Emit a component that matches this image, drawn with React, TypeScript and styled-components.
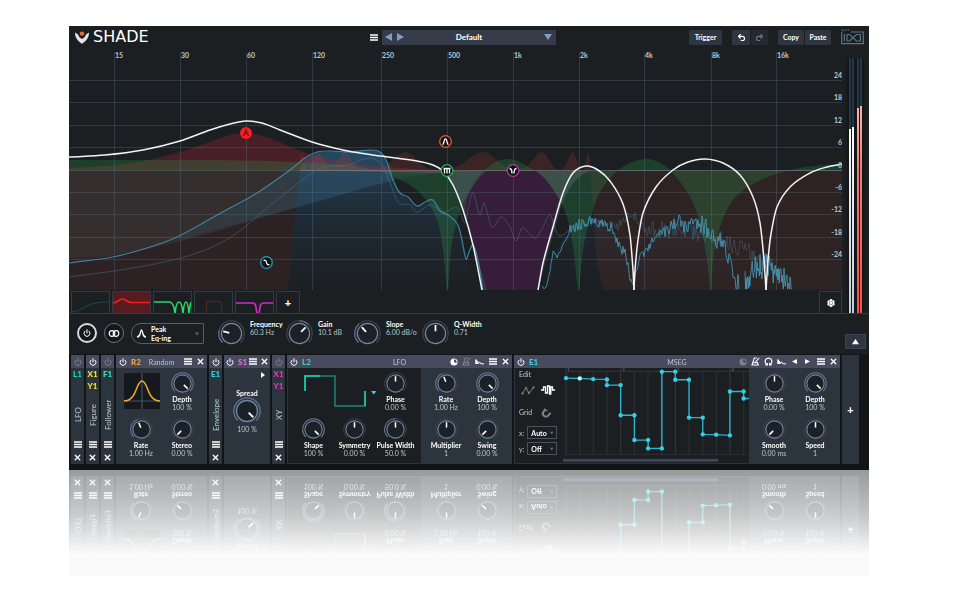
import React from "react";
import styled, { createGlobalStyle } from "styled-components";
import { Power, Redo2, Settings, Undo2, X } from "lucide-react";

const c = {
  bg: "#1c1f22",
  black: "#121417",
  panel: "#2c343d",
  bar: "#484a5e",
  control: "#2f3541",
  line: "#343a44",
  text: "#ffffff",
  soft: "#b9c8d0",
  ring: "#7386a0",
  cyan: "#35cfe3",
  teal: "#19d3b4",
};

const Global = createGlobalStyle`
  * { box-sizing: border-box; }
  body { margin: 0; background: #ffffff; font-family: Lato, "Open Sans", sans-serif; font-size: 7px; line-height: 8px; color: ${c.text}; }
  button, select, input { font: inherit; color: inherit; margin: 0; padding: 0; }
  button { cursor: pointer; }
  svg { display: block; }
`;

const Page = styled.main`
  padding: 26px 88px 13px 69px;
`;
const Stage = styled.div`
  background: #fafafa;
  padding-bottom: 106px;
`;
const Plugin = styled.div`
  background: ${c.bg};
`;

/* ---------- header ---------- */
const Header = styled.header`
  display: flex;
  align-items: center;
  height: 22px;
  padding: 0 5px 0 6px;
`;
const Brand = styled.h1`
  display: flex;
  align-items: center;
  gap: 4px;
  flex: 0 1 292px;
  margin: 0;
  font: 400 16px/18px "DejaVu Sans", sans-serif;
`;
const IconButton = styled.button<{ $dim?: boolean; $size?: number }>`
  display: flex;
  align-items: center;
  justify-content: center;
  flex: none;
  width: ${(p) => p.$size ?? 13}px;
  height: 13px;
  border: 0;
  background: none;
  color: ${(p) => (p.$dim ? "#7d8190" : c.text)};
`;
const Preset = styled.div`
  display: flex;
  align-items: center;
  width: 174px;
  height: 15px;
  margin-left: 2px;
  padding: 0 4px 0 0;
  background: #353b48;
  color: #7f9cc4;
`;
const PresetSelect = styled.select`
  flex: 1;
  min-width: 0;
  padding-right: 12px;
  border: 0;
  background: none;
  appearance: none;
  color: ${c.text};
  font-weight: 700;
  font-size: 8px;
  line-height: 13px;
  text-align-last: center;
`;
const HeaderRight = styled.div`
  display: flex;
  align-items: center;
  margin-left: auto;
`;
const ButtonGroup = styled.div`
  display: flex;
  gap: 1px;
  margin-right: 10px;
`;
const HeaderButton = styled.button<{ $w: number; $dim?: boolean }>`
  display: flex;
  align-items: center;
  justify-content: center;
  width: ${(p) => p.$w}px;
  height: 15px;
  border: 0;
  border-radius: 1px;
  background: ${(p) => (p.$dim ? "#242830" : c.control)};
  color: ${(p) => (p.$dim ? "#6d737d" : c.text)};
  font-weight: 700;
`;

/* ---------- analyzer ---------- */
const Analyzer = styled.section`
  display: grid;
  grid-template-columns: minmax(0, 1fr) 27px;
  border-bottom: 1px solid ${c.line};
`;
const Plot = styled.svg`
  width: 100%;
  height: auto;
`;
const Meters = styled.div`
  display: flex;
  gap: 1px;
  margin-top: 10px;
  padding: 0 7px;
  background: linear-gradient(90deg, ${c.bg} 3px, #14161a 6px, #14161a 21px, ${c.bg} 23px);
`;
const Meter = styled.div<{ $top: number; $hot?: boolean; $gap?: boolean }>`
  width: 2px;
  margin-left: ${(p) => (p.$gap ? 2 : 0)}px;
  padding-top: ${(p) => p.$top}px;
  background-color: #263948;
  &::after {
    content: "";
    display: block;
    height: 100%;
    background: ${(p) => (p.$hot ? "linear-gradient(#f3b7b2, #e8827c 30%, #f0524b)" : "linear-gradient(#ffffff, #c3ced6)")};
  }
`;
const BandRow = styled.div`
  display: flex;
  gap: 2px;
  height: 23px;
  padding: 1px 0 0 2px;
`;
const Band = styled.button<{ $active?: boolean; $w?: number }>`
  width: ${(p) => p.$w ?? 39}px;
  height: 22px;
  display: flex;
  align-items: center;
  justify-content: center;
  border: 1px solid ${c.line};
  border-bottom: 0;
  background: ${(p) => (p.$active ? "#571c1f" : c.bg)};
  font-weight: 900;
  font-size: 11px;
`;
const GearSlot = styled.div`
  margin-left: auto;
`;

/* ---------- band controls ---------- */
const Controls = styled.section`
  display: flex;
  align-items: flex-start;
  height: 40px;
  padding: 6px 3px 0 8px;
`;
const RoundButton = styled.button<{ $on?: boolean }>`
  display: flex;
  align-items: center;
  justify-content: center;
  width: 20px;
  height: 20px;
  margin: 3px 7px 0 0;
  border: ${(p) => (p.$on ? "2px solid #d5dce2" : "1px solid #69728a")};
  border-radius: 50%;
  background: #15181b;
`;
const TypeBox = styled.div`
  display: flex;
  align-items: center;
  gap: 4px;
  width: 73px;
  height: 21px;
  margin: 3px 14px 0 0;
  padding: 0 4px;
  border: 1px solid #565d70;
  border-radius: 10px 1px 1px 10px;
  color: #566888;
`;
const TypeField = styled.label`
  display: flex;
  flex-direction: column;
  flex: 1;
  min-width: 0;
  color: ${c.text};
  font-weight: 700;
`;
const PlainSelect = styled.select`
  width: 100%;
  height: 9px;
  border: 0;
  background: none;
  appearance: none;
  color: ${c.text};
  font-weight: 700;
`;
const CollapseButton = styled.button`
  display: flex;
  align-items: center;
  justify-content: center;
  width: 21px;
  height: 15px;
  margin: 14px 0 0 auto;
  border: 1px solid #3a4150;
  background: ${c.control};
`;

/* ---------- knobs ---------- */
const KnobCell = styled.label<{ $row?: boolean; $w?: number }>`
  display: flex;
  flex-direction: ${(p) => (p.$row ? "row" : "column")};
  align-items: ${(p) => (p.$row ? "flex-start" : "center")};
  gap: ${(p) => (p.$row ? 5 : 0)}px;
  width: ${(p) => p.$w ?? 41}px;
  white-space: nowrap;
`;
const Dial = styled.span`
  position: relative;
  flex: none;
`;
const DialInput = styled.input`
  position: absolute;
  inset: 0;
  width: 100%;
  height: 100%;
  opacity: 0;
`;
const KnobText = styled.span<{ $row?: boolean }>`
  display: flex;
  flex-direction: column;
  align-items: ${(p) => (p.$row ? "flex-start" : "center")};
`;
const KnobName = styled.span`
  font-weight: 700;
  line-height: 8px;
`;
const KnobValue = styled.output`
  color: ${c.soft};
  line-height: 9px;
`;

const polar = (r: number, deg: number) => {
  const a = ((deg - 90) * Math.PI) / 180;
  return `${(12 + r * Math.cos(a)).toFixed(2)} ${(12 + r * Math.sin(a)).toFixed(2)}`;
};
const arc = (r: number, from: number, to: number) =>
  `M${polar(r, from)}A${r} ${r} 0 ${to - from > 180 ? 1 : 0} 1 ${polar(r, to)}`;

type KnobProps = { name: string; value: string; turn: number; size?: number; row?: boolean; w?: number; bipolar?: boolean; labelFirst?: boolean };
function KnobDial({ name, turn, size = 23, bipolar }: KnobProps) {
  const start = bipolar ? 0 : -135;
  return (
    <Dial>
      <svg width={size} height={size} viewBox="0 0 24 24" fill="none" aria-hidden="true">
        <circle cx="12" cy="12" r="9" fill="#1c2127" stroke={c.ring} strokeWidth="1.1" />
        <path d={arc(11.3, -135, 135)} stroke="#3d4555" strokeWidth="1" />
        {turn > start && <path d={arc(11.3, start, turn)} stroke="#5d6f90" strokeWidth="1.1" />}
        <path d={`M${polar(2, turn)}L${polar(7.6, turn)}`} stroke="#fff" strokeWidth="1.6" />
      </svg>
      <DialInput type="range" min={-135} max={135} defaultValue={turn} aria-label={name} />
    </Dial>
  );
}
function Knob(p: KnobProps) {
  return (
    <KnobCell $row={p.row} $w={p.w}>
      {p.labelFirst && <KnobName>{p.name}</KnobName>}
      <KnobDial {...p} />
      <KnobText $row={p.row}>
        {!p.labelFirst && <KnobName>{p.name}</KnobName>}
        <KnobValue>{p.value}</KnobValue>
      </KnobText>
    </KnobCell>
  );
}

/* ---------- rack ---------- */
const Rack = styled.section`
  display: flex;
  gap: 2px;
  height: 116px;
  padding: 1px 10px 6px 2px;
  background: ${c.black};
  -webkit-box-reflect: below 0 linear-gradient(transparent 28%, rgba(0, 0, 0, 0.24) 62%, rgba(0, 0, 0, 0.42));
`;
const Panel = styled.article<{ $w?: number; $grow?: number }>`
  display: flex;
  flex-direction: column;
  flex: ${(p) => (p.$grow ? `${p.$grow} 1 0` : `0 0 ${p.$w}px`)};
  min-width: 0;
  overflow: hidden;
  background: ${c.panel};
`;
const PanelBar = styled.header<{ $narrow?: boolean; $tight?: boolean }>`
  display: grid;
  grid-template-columns: ${(p) => (p.$narrow ? "1fr" : p.$tight ? "1fr auto" : "1fr auto 1fr")};
  align-items: center;
  justify-items: ${(p) => (p.$narrow ? "center" : "stretch")};
  flex: none;
  height: 13px;
  background: ${c.bar};
`;
const BarSide = styled.div<{ $end?: boolean }>`
  display: flex;
  align-items: center;
  justify-content: ${(p) => (p.$end ? "flex-end" : "flex-start")};
`;
const Tag = styled.strong<{ $color: string }>`
  color: ${(p) => p.$color};
  font-weight: 900;
  font-size: 8px;
  margin-left: 2px;
`;
const BarTitle = styled.h2`
  margin: 0;
  color: ${c.soft};
  font-weight: 400;
  font-size: 7px;
  line-height: 8px;
`;
const NarrowBody = styled.div`
  display: flex;
  flex-direction: column;
  align-items: center;
  flex: 1;
  min-height: 0;
  padding-top: 2px;
`;
const TagStack = styled.div`
  display: flex;
  flex-direction: column;
  gap: 4px;
  height: 21px;
  & > strong { margin: 0; }
`;
const SideName = styled.h2`
  flex: 1;
  min-height: 0;
  display: flex;
  align-items: center;
  justify-content: center;
  margin: 0;
  writing-mode: vertical-rl;
  transform: rotate(180deg);
  color: ${c.soft};
  font-weight: 400;
  font-size: 8px;
  line-height: 10px;
`;
const KnobGrid = styled.div<{ $cols: number; $dark?: boolean; $grow?: boolean }>`
  display: grid;
  grid-template-columns: repeat(${(p) => p.$cols}, 41px);
  grid-auto-rows: 46px;
  justify-content: center;
  flex: ${(p) => (p.$grow ? "1 1 auto" : "0 0 91px")};
  padding-top: 4px;
  background: ${(p) => (p.$dark ? c.bg : c.panel)};
`;
const PanelBody = styled.div`
  display: flex;
  flex: 1;
  min-height: 0;
  margin: 0 0 1px 1px;
`;
const ShapeBox = styled.div`
  width: 36px;
  height: 36px;
  margin: 1px 0 0 3px;
  background: #15181c;
`;
const WaveCell = styled.div`
  grid-column: span 2;
`;
const SpreadBody = styled.div`
  display: flex;
  flex-direction: column;
  align-items: center;
  & > svg { align-self: flex-end; margin: 4px 5px 11px; }
`;
const EditColumn = styled.div`
  flex: 0 0 48px;
  display: grid;
  grid-template-columns: auto 1fr;
  align-content: start;
  align-items: center;
  padding: 2px 5px 0 4px;
  gap: 3px;
  background: ${c.bg};
  color: ${c.soft};
`;
const EditWide = styled.span`
  grid-column: span 2;
`;
const EditTools = styled.div`
  grid-column: span 2;
  display: flex;
  gap: 2px;
  margin: 2px 0 5px;
`;
const GridLine = styled.div`
  grid-column: span 2;
  display: flex;
  align-items: center;
  gap: 5px;
  margin-bottom: 4px;
`;
const ToolButton = styled.button<{ $on?: boolean }>`
  display: flex;
  width: 18px;
  height: 14px;
  align-items: center;
  justify-content: center;
  border: 0;
  background: none;
  color: ${(p) => (p.$on ? "#ffffff" : "#7c838b")};
`;
const BoxSelectWrap = styled.span`
  display: flex;
  align-items: center;
  width: 30px;
  height: 13px;
  padding: 0 3px;
  border: 1px solid #4a505c;
  color: #5d6f8b;
`;
const SegGraph = styled.div`
  flex: 1;
  min-width: 0;
  background: ${c.bg};
`;
const AddPanel = styled.button`
  flex: 0 0 17px;
  border: 0;
  background: ${c.panel};
  font-weight: 900;
  font-size: 11px;
`;

/* ---------- small drawings ---------- */
const Bars = () => (
  <svg width="8" height="7" viewBox="0 0 8 7" aria-hidden="true">
    <path d="M0 1h8M0 3.5h8M0 6h8" stroke="currentColor" strokeWidth="1.3" />
  </svg>
);
const Cross = () => <X size={9} strokeWidth={3.6} aria-hidden="true" />;
const PowerIcon = () => <Power size={8} strokeWidth={3} aria-hidden="true" />;
const Tri = ({ d, s = 8 }: { d: "left" | "right" | "down" | "up"; s?: number }) => {
  const paths = { left: "M8 0V8L0 4Z", right: "M0 0V8L8 4Z", down: "M0 1H8L4 7Z", up: "M0 7H8L4 1Z" };
  return (
    <svg width={s} height={s} viewBox="0 0 8 8" aria-hidden="true">
      <path d={paths[d]} fill="currentColor" />
    </svg>
  );
};
const Contrast = () => (
  <svg width="8" height="8" viewBox="0 0 8 8" aria-hidden="true">
    <circle cx="4" cy="4" r="3.6" fill="currentColor" />
    <path d="M4 1.2A2.8 2.8 0 0 1 6.4 5.2L4 4Z" fill={c.bar} />
  </svg>
);
const Metronome = () => (
  <svg width="9" height="9" viewBox="0 0 9 9" fill="none" stroke="currentColor" strokeWidth="1.1" aria-hidden="true">
    <path d="M5.8 1H3.3L1 8H7.2L6.4 5M2.2 5.8H6M3.6 6L8.2 .8" />
  </svg>
);
const Ramp = () => (
  <svg width="9" height="7" viewBox="0 0 9 7" fill="none" stroke="currentColor" strokeWidth="1" aria-hidden="true">
    <path d="M.8 6V1.5L3.4 4.6L5 4.2L5.8 5.8H9" />
    <path d="M.8 6V2.2L4.2 6Z" fill="currentColor" stroke="none" />
  </svg>
);
const LoopIcon = () => (
  <svg width="9" height="9" viewBox="0 0 9 9" fill="none" stroke="currentColor" strokeWidth="1.2" aria-hidden="true">
    <path d="M3.2 7.6A3.4 3.4 0 1 1 5.8 7.6M1.2 8H3.4V6M7.8 8H5.6V6" />
  </svg>
);
const SnapMagnet = () => (
  <svg width="11" height="11" viewBox="0 0 11 11" fill="none" stroke="currentColor" strokeWidth="2" aria-hidden="true">
    <path d="M4.600 1.800L2.600 4.600A3 3 0 0 0 7.400 8.400L9.600 5.800" />
    <path d="M6.300 2.800L5.200 4.400" strokeWidth="1.200" />
  </svg>
);
const BrandMark = () => (
  <svg width="14" height="13" viewBox="0 0 14 13" aria-hidden="true">
    <path d="M0 1.5L3 3.4L4.4 6.2L7 8L9.6 6.2L11 3.4L14 1.5C14 6 12 9.5 7 12.8C2 9.5 0 6 0 1.5Z" fill="#e4e7e8" />
    <circle cx="7" cy="2.6" r="2.2" fill="#f26b35" />
  </svg>
);
const MakerMark = () => (
  <svg width="23" height="16" viewBox="0 0 23 16" fill="none" stroke="#5c7484" aria-label="UVI" role="img">
    <path d="M.7 3V14.6H22.3V3H10" strokeWidth="1.2" />
    <path d="M3.4 5V12.200M6 5.500H8.600L15.400 12H19.400V5.500H15.400L8.600 12H6Z" strokeWidth="1.2" />
    <path d="M1 .2V1.8H3V.2M4.3 .2L5.3 1.8L6.3 .2M7.6 .2V2" strokeWidth=".7" />
  </svg>
);

/* ---------- curves ---------- */
type Pt = [number, number];
const smooth = (p: Pt[], lead = "M") => {
  let d = `${lead}${p[0][0]} ${p[0][1]}`;
  for (let i = 0; i < p.length - 1; i++) {
    const a = p[Math.max(0, i - 1)], b = p[i], e = p[i + 1], f = p[Math.min(p.length - 1, i + 2)];
    const span = e[0] - b[0];
    const m1 = (e[1] - a[1]) / Math.max(1, e[0] - a[0]);
    const m2 = (f[1] - b[1]) / Math.max(1, f[0] - b[0]);
    d += `C${(b[0] + span / 3).toFixed(1)} ${(b[1] + (m1 * span) / 3).toFixed(1)} ${(e[0] - span / 3).toFixed(1)} ${(e[1] - (m2 * span) / 3).toFixed(1)} ${e[0]} ${e[1]}`;
  }
  return d;
};
const noisy = (p: Pt[], step: number, amp: (x: number) => number, seed: number) => {
  let s = seed;
  const rnd = () => {
    s = (s * 16807) % 2147483647;
    return s / 2147483647 - 0.5;
  };
  let d = "";
  for (let x = p[0][0]; x <= p[p.length - 1][0]; x += step) {
    let i = 0;
    while (i < p.length - 2 && p[i + 1][0] < x) i++;
    const [a, b] = [p[i], p[i + 1]];
    const y = a[1] + ((b[1] - a[1]) * (x - a[0])) / (b[0] - a[0]) + rnd() * amp(x);
    d += `${d ? "L" : "M"}${x.toFixed(1)} ${Math.min(289, y).toFixed(1)}`;
  }
  return d;
};

const ZERO = 171;
const sumCurve: Pt[][] = [
  [[69, 157], [105, 155], [143, 150], [180, 141], [210, 130], [230, 124], [246, 121], [262, 123], [280, 130], [312, 142], [330, 147], [353, 152], [381, 156], [417, 161], [433, 165], [443, 171], [453, 185], [463, 210], [473, 245], [482, 290]],
  [[538, 290], [543, 263], [553, 227], [563, 193], [573, 173], [586, 166], [598, 170], [610, 181], [623, 204], [630, 235], [633, 270], [634, 290]],
  [[634, 290], [635, 270], [638, 240], [643, 213], [656, 187], [673, 170], [688, 162], [705, 159], [723, 163], [740, 175], [753, 197], [760, 223], [764, 260], [766, 290]],
  [[766, 290], [768, 260], [771, 234], [777, 207], [790, 187], [810, 173], [827, 167], [842, 164]],
];
const greenCurve: Pt[] = [
  [69, 160], [200, 160], [270, 161], [330, 164], [360, 167], [387, 174], [420, 193], [437, 220], [443, 250], [447, 290],
  [448, 290], [451, 250], [457, 220], [470, 190], [487, 168], [508, 159], [530, 168], [553, 190], [567, 217], [573, 247], [578, 290],
  [579, 290], [583, 250], [590, 220], [598, 196], [607, 182], [616, 172], [630, 163], [648, 159], [660, 163], [672, 172], [690, 197], [700, 223], [707, 260], [710, 290],
  [711, 290], [713, 260], [720, 227], [733, 200], [757, 182], [790, 170], [815, 166], [842, 164],
];
const redCurve: Pt[] = [[69, 168], [127, 164], [177, 153], [210, 142], [230, 135], [246, 133], [267, 137], [293, 148], [320, 157], [353, 163], [387, 167], [453, 171]];
const shelfCurve: Pt[] = [[69, 258], [110, 256], [177, 242], [227, 228], [277, 213], [330, 198], [387, 182], [430, 174], [490, 171]];
const spectrum: Pt[] = [
  [69, 263], [113, 257], [147, 248], [177, 237], [217, 215], [257, 193], [290, 170], [305, 158], [317, 152], [330, 151], [350, 152], [370, 150], [380, 152], [387, 162], [393, 180], [400, 193], [408, 197], [417, 206], [425, 202], [433, 200], [440, 211], [448, 215], [458, 225], [462, 240], [466, 259], [469, 252], [473, 245], [478, 260], [483, 290],
];
const faint: Pt[] = [
  [69, 277], [127, 269], [177, 259], [210, 248], [237, 233], [267, 208], [293, 187], [317, 170], [330, 166], [347, 165], [370, 158], [382, 165], [390, 183], [398, 202], [410, 205], [417, 212], [430, 205], [443, 212], [458, 208], [465, 223], [469, 205], [473, 193], [480, 215], [484, 203], [492, 227], [501, 217], [510, 227], [516, 241], [522, 228], [535, 238], [543, 227], [550, 215], [558, 235], [570, 230],
];
const highSpectrum: Pt[] = [[542, 288], [546, 286], [550, 270], [553, 252], [557, 257], [565, 242], [570, 230], [578, 225], [592, 219], [606, 226], [612, 228], [618, 246], [625, 252], [631, 280], [634, 286], [638, 262], [642, 257], [648, 247], [658, 233], [670, 230], [677, 219], [684, 228], [695, 225], [703, 223], [712, 233], [719, 240], [727, 252], [733, 272], [739, 288]];
const topSpectrum: Pt[] = [[745, 284], [757, 267], [767, 266], [777, 274], [792, 289]];
const highFaint: Pt[] = [[570, 230], [590, 222], [617, 227], [632, 213], [647, 230], [680, 230], [710, 236], [733, 245], [750, 252], [757, 260], [780, 272]];
const orangeBumps: Pt[] = [[298, 171], [302, 153], [306, 170], [310, 167], [318, 152], [328, 168], [334, 167], [345, 152], [357, 167], [368, 169], [384, 167], [405, 152], [424, 166], [438, 170], [458, 166], [483, 152], [506, 167], [517, 170], [527, 166], [542, 152], [554, 167], [560, 170], [565, 166], [573, 152], [580, 169], [584, 169], [588, 153], [591, 171]];

const freqs: [string, number][] = [["15", 114], ["30", 180], ["60", 246], ["120", 312], ["250", 381], ["500", 447], ["1k", 513], ["2k", 579], ["4k", 644], ["8k", 711], ["16k", 776]];
const gains: [string, number][] = [["24", 81], ["18", 103], ["12", 126], ["6", 148], ["0", 171], ["-6", 193], ["-12", 215], ["-18", 238], ["-24", 260]];

function ResponsePlot() {
  return (
    <Plot viewBox="69 48 773 242" fill="none" role="img" aria-label="Equalizer response">
      <defs>
        <linearGradient id="deep" x1="0" y1="150" x2="0" y2="290" gradientUnits="userSpaceOnUse">
          <stop offset="0" stopColor="#2b6590" stopOpacity=".45" />
          <stop offset=".6" stopColor="#28506e" stopOpacity=".18" />
          <stop offset="1" stopColor="#28506e" stopOpacity="0" />
        </linearGradient>
        <linearGradient id="wedge" x1="177" y1="0" x2="400" y2="0" gradientUnits="userSpaceOnUse">
          <stop offset="0" stopColor="#276485" stopOpacity=".16" />
          <stop offset="1" stopColor="#276485" stopOpacity=".3" />
        </linearGradient>
      </defs>
      <path d="M69 171H300L295 215L288 290H69Z" fill="#a83a30" fillOpacity=".12" />
      <path d="M590 171H842V290H603L597 265Z" fill="#a83a30" fillOpacity=".13" />
      <path d={`${smooth(shelfCurve)}V${ZERO}H69Z`} fill="#8aa0a0" fillOpacity=".1" />
      <path d="M177 240L217 215L257 193L290 170L317 153L340 151L370 150L380 152L390 172L394 180L330 198L277 213Z" fill="url(#wedge)" />
      <path d="M300 171L305 158L317 152L370 150L380 152L387 162L393 180L400 193L417 206L433 200L448 215L458 225L466 259L482 290H288L295 215Z" fill="url(#deep)" />
      <path d="M545 290L553 252L576 224L590 218L610 225L623 250L631 280L657 232L677 220L703 223L727 250L739 290Z" fill="url(#deep)" fillOpacity=".7" />
      <path d={`${smooth(redCurve)}H69Z`} fill="#c02035" fillOpacity=".27" />
      <path d={`${smooth(orangeBumps)}Z`} fill="#b8402c" fillOpacity=".2" />
      <path d={`${smooth(greenCurve)}V${ZERO}H69Z`} fill="#2a9a4e" fillOpacity=".26" />
      <path d="M330 171H590C575 176 567 190 560 210L550 245L538 290H484L473 245L463 210L453 185L443 173Z" fill="#a898b8" fillOpacity=".2" />
      <path d="M487 171H536C545 177 552 187 559 199L551 228L543 262L538 290H487L477 257L468 228C462 205 468 187 487 171Z" fill="#361e3a" />
      <g stroke="#5d7892" strokeOpacity=".3" strokeWidth="1">
        {freqs.map(([t, x]) => <path key={t} d={`M${x + 0.5} 52V290`} />)}
        {gains.map(([t, y]) => <path key={t} d={`M69 ${y - 0.5}H842`} />)}
      </g>
      <path d="M300 170.500H842" stroke="#a09aa8" strokeOpacity=".35" />
      <g strokeLinejoin="round">
        <path d={smooth(faint)} stroke="#4a7c9c" strokeOpacity=".45" />
        <path d={noisy(highFaint, 1, (x) => (x < 640 ? 9 : 18), 77)} stroke="#4f88a0" strokeOpacity=".4" strokeWidth=".8" />
        <path d={smooth(spectrum)} stroke="#4796b8" strokeOpacity=".8" strokeWidth="1.2" />
        <path d={noisy(highSpectrum, 1, (x) => (x < 570 ? 4 : x < 670 ? 11 : x < 700 ? 15 : 22), 41)} stroke="#4aa3c4" strokeOpacity=".85" strokeWidth=".9" />
        <path d={noisy(topSpectrum, 0.6, () => 26, 911)} stroke="#4aa3c4" strokeOpacity=".85" strokeWidth=".9" />
      </g>
      {sumCurve.map((p, i) => <path key={i} d={smooth(p)} stroke="#f1f4f4" strokeWidth="1.5" />)}
      <g fill={c.soft} fontSize="7" fontWeight="700">
        {freqs.map(([t, x]) => <text key={t} x={x + 1} y="58">{t}</text>)}
        {gains.map(([t, y]) => <text key={t} x="842" y={y - 3} textAnchor="end">{t}</text>)}
      </g>
      <circle cx="246" cy="133" r="6" fill="#fa1c1f" />
      <path d="M243 135.500Q244.500 135.500 246 130.500Q247.500 135.500 249 135.500" stroke="#4a0c10" strokeWidth="1.100" />
      <g fill="#101316" strokeWidth="1.300">
        <circle cx="445.500" cy="141.500" r="5.800" stroke="#e0582c" />
        <circle cx="447" cy="170.500" r="5.800" stroke="#2bb45a" />
        <circle cx="513" cy="170.500" r="5.800" stroke="#b838a8" />
        <circle cx="266.500" cy="262.500" r="5.800" stroke="#2a9fb8" />
      </g>
      <g stroke="#fff" strokeWidth="1.300">
        <path d="M442.500 144.500C444.500 144.500 443.500 138.800 445.500 138.800S446.500 144.500 448.500 144.500" />
        <path d="M443.500 168.500H450.500M444.500 168.500V173.500M447 168.500V173.500M449.500 168.500V173.500" />
        <path d="M509.500 168.500Q512 168.500 512 173.500M516.500 168.500Q514 168.500 514 173.500" />
        <path d="M263.500 260.500Q266 259.500 266.500 262.500Q267 265.500 269.500 264.500" />
      </g>
    </Plot>
  );
}

const bandShapes = [
  { name: "Band 1", color: "#1e4a4c", d: "M0 20C14 18 12 10 37 10" },
  { name: "Band 2", color: "#fb1d1d", d: "M0 11C6 10 6 7 9 7S14 10 18 10.500H37" },
  { name: "Band 3", color: "#2bd668", d: "M0 10H16Q20 11 21 22Q22 10 25 10T29 22Q30 10 32 10T35 22Q36 12 37 10" },
  { name: "Band 4", color: "#5a2a22", d: "M11 22L12 9L14 10L16 9L18 10L20 9L22 10L24 9L26 10L27 22" },
  { name: "Band 5", color: "#d02cc0", d: "M0 11H17C20 11 20 15 21 22M23 22C24 15 24 11 27 11H37" },
];

/* ---------- rack panels ---------- */
function NarrowPanel({ tags, color, name, off }: { tags: string[]; color: string; name: string; off?: boolean }) {
  return (
    <Panel $w={13}>
      <PanelBar $narrow><IconButton $dim={off} aria-label={`${name} power`}><PowerIcon /></IconButton></PanelBar>
      <NarrowBody>
        <TagStack>{tags.map((t) => <Tag key={t} $color={color}>{t}</Tag>)}</TagStack>
        <SideName>{name}</SideName>
        <IconButton aria-label={`${name} menu`}><Bars /></IconButton>
        <IconButton aria-label={`Remove ${name}`}><Cross /></IconButton>
      </NarrowBody>
    </Panel>
  );
}
function PanelHeader({ tag, color, title, children }: { tag: string; color: string; title: string; children?: React.ReactNode }) {
  return (
    <PanelBar>
      <BarSide>
        <IconButton aria-label={`${tag} power`}><PowerIcon /></IconButton>
        <Tag $color={color}>{tag}</Tag>
      </BarSide>
      <BarTitle>{title}</BarTitle>
      <BarSide $end>
        {children}
        <IconButton aria-label={`${tag} menu`}><Bars /></IconButton>
        <IconButton aria-label={`Remove ${tag}`}><Cross /></IconButton>
      </BarSide>
    </PanelBar>
  );
}

const segments: Pt[] = [[169, 84], [210, 85], [250, 87], [291, 88], [291, 105], [332, 105], [332, 195], [373, 195], [373, 269], [414, 269], [414, 294], [455, 294], [455, 65], [495, 65], [495, 89], [536, 89], [536, 202], [577, 202], [577, 252], [617, 253], [658, 255], [658, 124], [699, 124], [699, 145]];

function SegmentGraph() {
  return (
    <SegGraph>
      <svg width="100%" viewBox="160 54 555 284" role="img" aria-label="Segment envelope">
        <path d="M169 64H715" stroke="#4a3c3c" strokeWidth="2" />
        <path d="M169 312H715" stroke="#30353a" strokeWidth="2" />
        <g stroke="#34383d" strokeWidth="3">
          {Array.from({ length: 14 }, (_, i) => <path key={i} d={`M${169 + i * 40.8} ${i % 4 ? 64 : 54}V312`} strokeOpacity={i % 4 ? 0.7 : 1} />)}
        </g>
        <g fill="#70777d" fontSize="13">
          <text x="173" y="63">1</text><text x="337" y="63">2</text><text x="500" y="63">3</text><text x="663" y="63">4</text>
        </g>
        <rect x="160" y="325" width="463" height="9" fill="#3e4658" />
        <path d={`M${segments.map((p) => p.join(" ")).join("L")}H715`} fill="none" stroke="#2bb6cc" strokeWidth="4" />
        {segments.map(([x, y], i) => <circle key={i} cx={x} cy={y} r="6.500" fill={i === 1 ? "#c8f6fb" : c.cyan} />)}
      </svg>
    </SegGraph>
  );
}

export default function App() {
  return (
    <Page>
      <Global />
      <Stage>
        <Plugin>
          <Header>
            <Brand><BrandMark />SHADE</Brand>
            <IconButton aria-label="Preset menu"><Bars /></IconButton>
            <Preset>
              <IconButton aria-label="Previous preset" $size={12}><svg width="7" height="8" viewBox="0 0 7 8"><path d="M7 0V8L0 4Z" fill="#7f9cc4" /></svg></IconButton>
              <IconButton aria-label="Next preset" $size={12}><svg width="7" height="8" viewBox="0 0 7 8"><path d="M0 0V8L7 4Z" fill="#7f9cc4" /></svg></IconButton>
              <PresetSelect aria-label="Preset"><option>Default</option></PresetSelect>
              <Tri d="down" />
            </Preset>
            <HeaderRight>
              <ButtonGroup><HeaderButton $w={33}>Trigger</HeaderButton></ButtonGroup>
              <ButtonGroup>
                <HeaderButton $w={18} aria-label="Undo"><Undo2 size={9} strokeWidth={3} /></HeaderButton>
                <HeaderButton $w={17} $dim aria-label="Redo"><Redo2 size={9} strokeWidth={3} /></HeaderButton>
              </ButtonGroup>
              <ButtonGroup><HeaderButton $w={26}>Copy</HeaderButton><HeaderButton $w={26}>Paste</HeaderButton></ButtonGroup>
              <MakerMark />
            </HeaderRight>
          </Header>

          <Analyzer>
            <div>
              <ResponsePlot />
              <BandRow>
                {bandShapes.map((b, i) => (
                  <Band key={b.name} $active={i === 1} aria-label={b.name}>
                    <svg width="37" height="21" viewBox="0 0 37 21" fill="none"><path d={b.d} stroke={b.color} strokeWidth={i === 0 || i === 3 ? 1 : 1.6} /></svg>
                  </Band>
                ))}
                <Band $w={24} aria-label="Add band">+</Band>
                <GearSlot><Band $w={23} aria-label="Settings"><Settings size={8} strokeWidth={4} /></Band></GearSlot>
              </BandRow>
            </div>
            <Meters>
              <Meter $top={71} />
              <Meter $top={69} />
              <Meter $top={50} $hot $gap />
              <Meter $top={48} $hot />
            </Meters>
          </Analyzer>

          <Controls>
            <RoundButton $on aria-label="Band power"><Power size={8} strokeWidth={3} /></RoundButton>
            <RoundButton aria-label="Stereo link">
              <svg width="12" height="7" viewBox="0 0 12 7" fill="none" stroke="#fff" strokeWidth="1.200"><circle cx="4" cy="3.500" r="2.800" /><circle cx="8" cy="3.500" r="2.800" /></svg>
            </RoundButton>
            <TypeBox>
              <svg width="11" height="9" viewBox="0 0 11 9" fill="none" stroke="#fff" strokeWidth="1.300"><path d="M1 8Q3.500 8 4.200 4.500Q5 1 5.500 1T6.800 4.500Q7.500 8 10 8" /></svg>
              <TypeField>
                Peak
                <PlainSelect><option>Eq-ing</option></PlainSelect>
              </TypeField>
              <Tri d="down" s={4} />
            </TypeBox>
            <Knob row w={68} size={27} name="Frequency" value="60.3 Hz" turn={-75} />
            <Knob row w={68} size={27} name="Gain" value="10.1 dB" turn={45} bipolar />
            <Knob row w={68} size={27} name="Slope" value="6.00 dB/o" turn={-42} />
            <Knob row w={68} size={27} name="Q-Width" value="0.71" turn={0} bipolar />
            <CollapseButton aria-label="Collapse modulators"><Tri d="up" s={7} /></CollapseButton>
          </Controls>

          <Rack>
            <NarrowPanel tags={["L1"]} color={c.teal} name="LFO" off />
            <NarrowPanel tags={["X1", "Y1"]} color="#f5e52a" name="Figure" />
            <NarrowPanel tags={["F1"]} color="#33e6c4" name="Follower" off />
            <Panel $w={91}>
              <PanelHeader tag="R2" color="#f0a830" title="Random" />
              <KnobGrid $cols={2} $grow>
                <ShapeBox>
                  <svg width="36" height="36" viewBox="0 0 36 36" fill="none">
                    <path d="M18 0V36M0 28H36" stroke="#43526b" strokeWidth="1.200" />
                    <path d="M0 28C13 28 12 8 18 8S23 28 36 28" stroke="#f0ae28" strokeWidth="1.500" />
                  </svg>
                </ShapeBox>
                <Knob name="Depth" value="100 %" turn={135} />
                <Knob name="Rate" value="1.00 Hz" turn={-22} />
                <Knob name="Stereo" value="0.00 %" turn={-135} />
              </KnobGrid>
            </Panel>
            <NarrowPanel tags={["E1"]} color={c.cyan} name="Envelope" />
            <Panel $w={46}>
              <PanelBar $tight>
                <BarSide>
                  <IconButton $size={12} aria-label="S1 power"><PowerIcon /></IconButton>
                  <Tag $color="#e668e8">S1</Tag>
                </BarSide>
                <BarSide $end>
                  <IconButton $size={10} aria-label="S1 menu"><Bars /></IconButton>
                  <IconButton $size={12} aria-label="Remove S1"><Cross /></IconButton>
                </BarSide>
              </PanelBar>
              <SpreadBody>
                <svg width="4" height="6" viewBox="0 0 4 6"><path d="M0 0V6L4 3Z" fill="#fff" /></svg>
                <Knob labelFirst size={28} name="Spread" value="100 %" turn={135} />
              </SpreadBody>
            </Panel>
            <NarrowPanel tags={["X1", "Y1"]} color="#e838c0" name="XY" off />
            <Panel $grow={225}>
              <PanelHeader tag="L2" color="#2fd0cc" title="LFO">
                <IconButton aria-label="Polarity"><Contrast /></IconButton>
                <IconButton $dim aria-label="Tempo sync"><Metronome /></IconButton>
                <IconButton aria-label="Retrigger"><Ramp /></IconButton>
              </PanelHeader>
              <PanelBody>
                <KnobGrid $cols={3} $dark $grow>
                  <WaveCell>
                    <svg width="84" height="40" viewBox="0 0 84 40" fill="none">
                      <path d="M12 19V4H42V34H72V19" stroke="#15877c" strokeWidth="1.500" />
                      <path d="M12 19V4H27M72 34V19" stroke={c.teal} strokeWidth="1.500" />
                      <path d="M78 19H83.500L80.700 22.500Z" fill={c.cyan} />
                    </svg>
                  </WaveCell>
                  <Knob name="Phase" value="0.00 %" turn={0} bipolar />
                  <Knob name="Shape" value="100 %" turn={135} />
                  <Knob name="Symmetry" value="0.00 %" turn={0} bipolar />
                  <Knob name="Pulse Width" value="50.0 %" turn={0} />
                </KnobGrid>
                <KnobGrid $cols={2}>
                  <Knob name="Rate" value="1.00 Hz" turn={-22} />
                  <Knob name="Depth" value="100 %" turn={135} />
                  <Knob name="Multiplier" value="1" turn={0} bipolar />
                  <Knob name="Swing" value="0.00 %" turn={-135} />
                </KnobGrid>
              </PanelBody>
            </Panel>
            <Panel $grow={326}>
              <PanelHeader tag="E1" color={c.cyan} title="MSEG">
                <IconButton $dim aria-label="Polarity"><Contrast /></IconButton>
                <IconButton aria-label="Tempo sync"><Metronome /></IconButton>
                <IconButton aria-label="Loop"><LoopIcon /></IconButton>
                <IconButton aria-label="Retrigger"><Ramp /></IconButton>
                <IconButton aria-label="Previous shape"><Tri d="left" s={5} /></IconButton>
                <IconButton aria-label="Next shape"><Tri d="right" s={5} /></IconButton>
              </PanelHeader>
              <PanelBody>
                <EditColumn>
                  <EditWide>Edit</EditWide>
                  <EditTools>
                    <ToolButton aria-label="Draw lines">
                      <svg width="14" height="9" viewBox="0 0 14 9" fill="none" stroke="currentColor"><path d="M1 8L5 2L8 7L13 1" /><circle cx="1.500" cy="7.500" r=".8" /><circle cx="5" cy="2" r=".8" /><circle cx="8" cy="7" r=".8" /><circle cx="12.500" cy="1.500" r=".8" /></svg>
                    </ToolButton>
                    <ToolButton $on aria-label="Draw steps">
                      <svg width="14" height="10" viewBox="0 0 14 10" fill="none" stroke="currentColor" strokeWidth="1.300"><path d="M0 5H2.500V2H4.500V8H6.500V1H8.500V9H9.800V2H11.500V5H14" /></svg>
                    </ToolButton>
                  </EditTools>
                  <GridLine>
                    <span>Grid</span>
                    <ToolButton aria-label="Snap to grid"><SnapMagnet /></ToolButton>
                  </GridLine>
                  <label htmlFor="grid-x">x:</label>
                  <BoxSelectWrap><PlainSelect id="grid-x"><option>Auto</option></PlainSelect><Tri d="down" s={4} /></BoxSelectWrap>
                  <label htmlFor="grid-y">y:</label>
                  <BoxSelectWrap><PlainSelect id="grid-y"><option>Off</option></PlainSelect><Tri d="down" s={4} /></BoxSelectWrap>
                </EditColumn>
                <SegmentGraph />
                <KnobGrid $cols={2}>
                  <Knob name="Phase" value="0.00 %" turn={0} bipolar />
                  <Knob name="Depth" value="100 %" turn={135} />
                  <Knob name="Smooth" value="0.00 ms" turn={-135} />
                  <Knob name="Speed" value="1" turn={0} bipolar />
                </KnobGrid>
              </PanelBody>
            </Panel>
            <AddPanel aria-label="Add modulator">+</AddPanel>
          </Rack>
        </Plugin>
      </Stage>
    </Page>
  );
}
